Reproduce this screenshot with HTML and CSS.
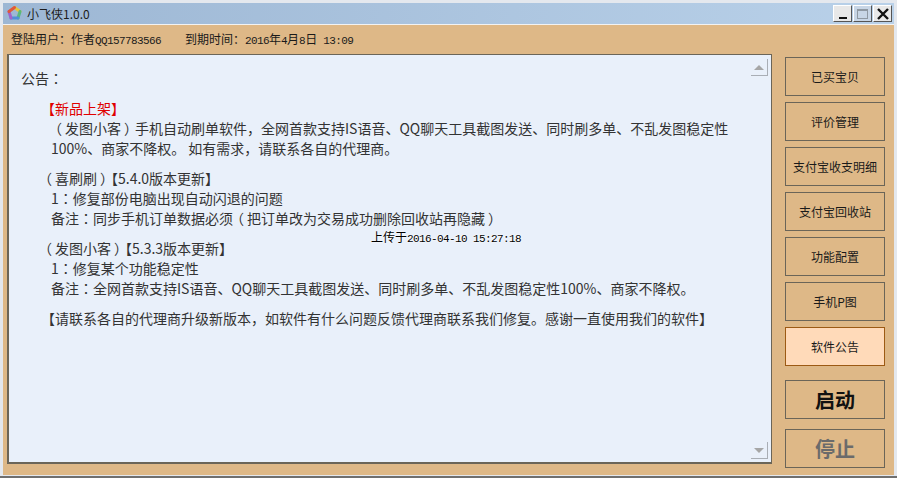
FILE: index.html
```html
<!DOCTYPE html>
<html lang="zh-CN">

<head>
    <meta charset="UTF-8">
    <title>小飞侠1.0.0</title>
    <link rel="stylesheet" href="styles.css">
</head>

<body>
    <div class="window">
        <!-- Title bar -->
        <div class="title-bar">
            <svg class="app-icon" width="17" height="17" viewBox="0 0 17 17" fill="none" stroke-width="3" stroke-linecap="round">
                <path d="M8.5 2.5L14 6.5" stroke="#e6c43c" />
                <path d="M14 6.5L12 13" stroke="#58b87c" />
                <path d="M12 13H5" stroke="#4f8fd8" />
                <path d="M5 13L3 6.5" stroke="#a262c8" />
                <path d="M3 6.5L8.5 2.5" stroke="#e0583c" />
            </svg>
            <span class="title-text">小飞侠1.0.0</span>
            <div class="win-btns">
                <div class="win-btn"><span class="min-mark"></span></div>
                <div class="win-btn win-btn-off"><span class="max-mark"></span></div>
                <div class="win-btn">
                    <svg width="14" height="14" viewBox="0 0 14 14" stroke="#111" stroke-width="2.4">
                        <path d="M2 2L12 12M12 2L2 12" />
                    </svg>
                </div>
            </div>
        </div>

        <div class="body-wrap">
            <!-- User info -->
            <div class="info-bar">
                <span class="info-user">登陆用户：作者<span class="num">QQ157783566</span></span>
                <span>到期时间：<span class="num">2016</span>年<span class="num">4</span>月<span class="num">8</span>日<span class="num"> 13:09</span></span>
            </div>

            <div class="main">
                <!-- Notice panel -->
                <div class="notice">
                    <p class="notice-head">公告<i lang="zh-TW">：</i></p>

                    <div class="para">
                        <p class="hot">【新品上架】</p>
                        <p class="sub"><i class="po">（</i>发图小客<i class="pc">）</i>手机自动刷单软件，全网首款支持IS语音、QQ聊天工具截图发送、同时刷多单、不乱发图稳定性</p>
                        <p class="sub">100%、商家不降权。 如有需求，请联系各自的代理商。</p>
                    </div>

                    <div class="para">
                        <p><i class="po">（</i>喜刷刷<i class="pc">）</i>【5.4.0版本更新】</p>
                        <p class="sub">1<i lang="zh-TW">：</i>修复部份电脑出现自动闪退的问题</p>
                        <p class="sub">备注<i lang="zh-TW">：</i>同步手机订单数据必须<i class="po">（</i>把订单改为交易成功删除回收站再隐藏<i class="pc">）</i></p>
                    </div>

                    <div class="para">
                        <p><i class="po">（</i>发图小客<i class="pc">）</i>【5.3.3版本更新】</p>
                        <p class="sub">1<i lang="zh-TW">：</i>修复某个功能稳定性</p>
                        <p class="sub">备注<i lang="zh-TW">：</i>全网首款支持IS语音、QQ聊天工具截图发送、同时刷多单、不乱发图稳定性100%、商家不降权。</p>
                    </div>

                    <div class="para">
                        <p>【请联系各自的代理商升级新版本，如软件有什么问题反馈代理商联系我们修复。感谢一直使用我们的软件】</p>
                    </div>

                    <div class="stamp">上传于<span class="num">2016-04-10 15:27:18</span></div>

                    <div class="scroll-arrow scroll-up"><span></span></div>
                    <div class="scroll-arrow scroll-down"><span></span></div>
                </div>

                <!-- Side buttons -->
                <div class="side">
                    <div class="nav">
                        <button class="btn">已买宝贝</button>
                        <button class="btn">评价管理</button>
                        <button class="btn">支付宝收支明细</button>
                        <button class="btn">支付宝回收站</button>
                        <button class="btn">功能配置</button>
                        <button class="btn">手机P图</button>
                        <button class="btn btn-active">软件公告</button>
                    </div>
                    <div class="actions">
                        <button class="btn btn-big">启动</button>
                        <button class="btn btn-big btn-off">停止</button>
                    </div>
                </div>
            </div>
        </div>
    </div>
</body>

</html>
```

FILE: styles.css
```css
* {
    margin: 0;
    padding: 0;
    box-sizing: border-box;
}

body {
    width: 897px;
    height: 478px;
    overflow: hidden;
    font-family: "Noto Sans CJK SC", "Liberation Sans", sans-serif;
    background-color: #6f6f6f;
}

.window {
    height: 476px;
    padding: 3px 3px 1px 3px;
    background-color: #e4e8ee;
    display: flex;
    flex-direction: column;
}

/* Title bar */
.title-bar {
    height: 21px;
    display: flex;
    align-items: center;
    background: linear-gradient(to right, #9db7d4, #b9d1e9);
    padding-left: 3px;
    flex-shrink: 0;
}

.app-icon {
    margin-right: 4px;
}

.title-text {
    font-size: 12px;
    color: #1c1c1c;
}

.win-btns {
    margin-left: auto;
    margin-right: 2px;
    display: flex;
    gap: 1px;
}

.win-btn {
    width: 19px;
    height: 17px;
    background-color: #e8e8e8;
    border: 1px solid;
    border-color: #fff #555 #555 #fff;
    display: flex;
    align-items: center;
    justify-content: center;
}

.win-btn-off {
    background-color: #c8d6e6;
}

.min-mark {
    width: 8px;
    height: 2px;
    background-color: #111;
    margin-top: 8px;
}

.max-mark {
    width: 11px;
    height: 10px;
    border: 1px solid #8f99a3;
    border-top-width: 2px;
}

.body-wrap {
    flex: 1;
    border-top: 1px solid #f2f2f2;
    background-color: #deb887;
    padding: 0 4px;
    display: flex;
    flex-direction: column;
}

/* User info */
.info-bar {
    height: 29px;
    display: flex;
    align-items: center;
    padding: 0 0 2px 4px;
    font-size: 12px;
    color: #1a1a1a;
    flex-shrink: 0;
}

.info-user {
    margin-right: 24px;
}

.num {
    font-family: "Liberation Mono", monospace;
    font-size: 11px;
    letter-spacing: -0.6px;
    white-space: pre;
}

.main {
    display: flex;
    align-items: flex-start;
}

/* Notice panel */
.notice {
    position: relative;
    width: 765px;
    height: 410px;
    border: 1px solid #6b6558;
    border-width: 1px 1px 2px 2px;
    background-color: #e9f0fa;
    padding: 13px 0 0 12px;
    font-size: 14px;
    line-height: 20px;
    color: #333;
    white-space: nowrap;
}

/* centred full-width punctuation, as in the original font */
.notice i {
    font-family: "Noto Sans CJK TC", sans-serif;
    font-style: normal;
}

.po,
.pc {
    font-feature-settings: "halt";
}

.po {
    padding: 0 3px 0 4px;
}

.pc {
    padding: 0 4px 0 3px;
}

.notice-head {
    margin-bottom: 10px;
}

.para {
    margin-bottom: 10px;
    padding-left: 20px;
}

.hot {
    color: #e00000;
}

.sub {
    padding-left: 10px;
}

.stamp {
    position: absolute;
    left: 362px;
    top: 172px;
    font-size: 12px;
    line-height: 20px;
    color: #000;
    text-shadow: 0 0 2px #fff, 0 0 2px #fff;
}

.scroll-arrow {
    position: absolute;
    right: 3px;
    width: 17px;
    height: 17px;
    border-right: 1px solid #a9aeb5;
    border-bottom: 1px solid #a9aeb5;
    display: flex;
    align-items: center;
    justify-content: center;
}

.scroll-up {
    top: 4px;
}

.scroll-down {
    bottom: 3px;
}

.scroll-arrow span {
    width: 0;
    height: 0;
    border-left: 5px solid transparent;
    border-right: 5px solid transparent;
}

.scroll-up span {
    border-bottom: 5px solid #a6a6a6;
}

.scroll-down span {
    border-top: 5px solid #a6a6a6;
}

/* Side buttons */
.side {
    margin-left: 13px;
    margin-top: 3px;
    width: 100px;
    display: flex;
    flex-direction: column;
}

.nav {
    display: flex;
    flex-direction: column;
    gap: 6px;
}

.actions {
    margin-top: 14px;
    display: flex;
    flex-direction: column;
    gap: 10px;
}

.btn {
    width: 100px;
    height: 39px;
    background-color: #deb887;
    border: 1px solid #6b6558;
    font-family: inherit;
    font-size: 12px;
    color: #1a1a1a;
    white-space: nowrap;
}

.btn-active {
    background-color: #ffdab9;
    border-color: #9c5a14;
}

.btn-big {
    font-size: 20px;
    font-weight: bold;
    color: #111;
}

.btn-off {
    color: #6b6b6b;
}
```
